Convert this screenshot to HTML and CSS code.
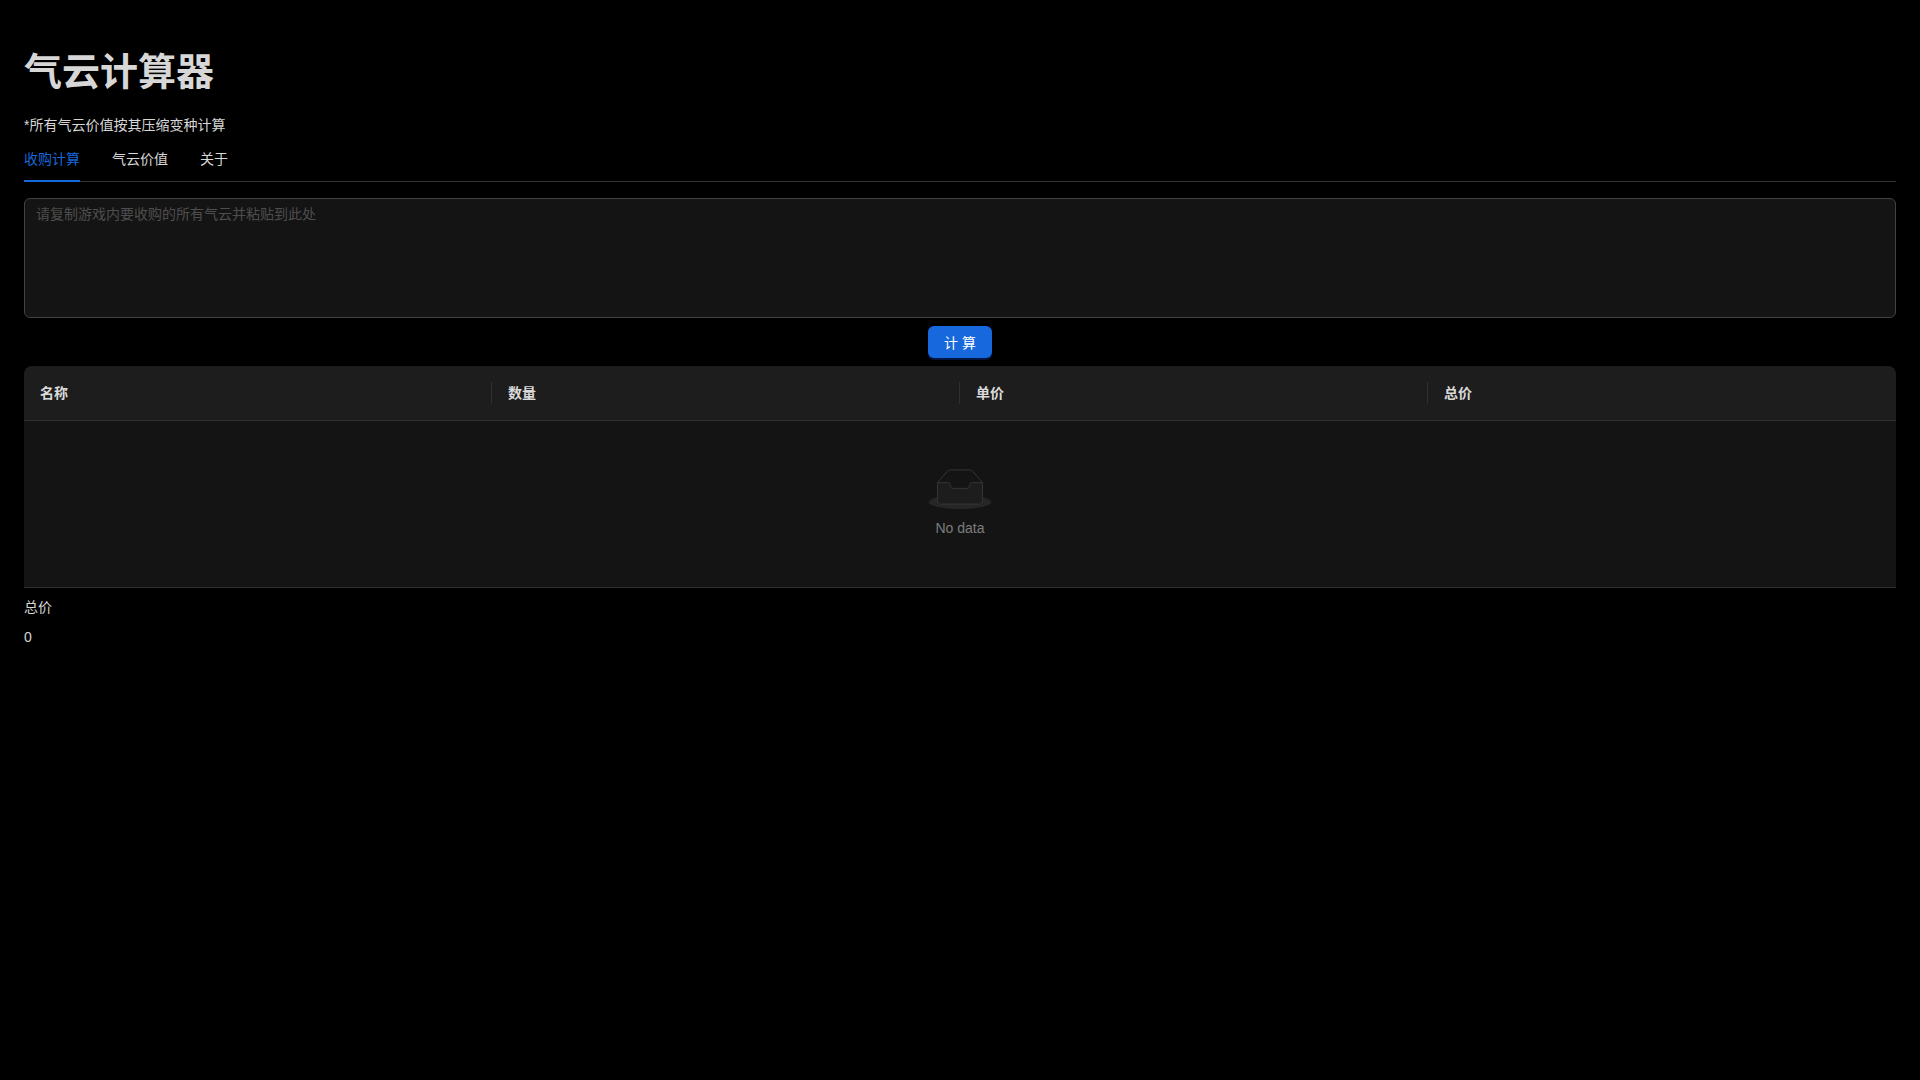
FILE: index.html
```html
<!DOCTYPE html>
<html lang="zh-CN">
<head>
  <meta charset="UTF-8" />
  <meta name="viewport" content="width=device-width, initial-scale=1" />
  <title>气云计算器</title>
  <link rel="stylesheet" href="styles.css">
</head>
<body>

  <div class="container">
    <h1>气云计算器</h1>
    <p class="note">*所有气云价值按其压缩变种计算</p>

    <div class="tabs">
      <div class="tab active">收购计算</div>
      <div class="tab">气云价值</div>
      <div class="tab">关于</div>
    </div>

    <textarea class="paste-box" placeholder="请复制游戏内要收购的所有气云并粘贴到此处"></textarea>

    <div class="actions">
      <button class="calc-button">计 算</button>
    </div>

    <table class="result-table">
      <thead>
        <tr>
          <th>名称</th>
          <th>数量</th>
          <th>单价</th>
          <th>总价</th>
        </tr>
      </thead>
      <tbody>
        <tr>
          <td colspan="4" class="empty-cell">
            <div class="empty">
              <svg class="empty-icon" width="64" height="40" viewBox="0 0 64 41">
                <g transform="translate(0 1)" fill="none" fill-rule="evenodd">
                  <ellipse cx="32" cy="33" rx="32" ry="7" fill="#262626"/>
                  <g fill-rule="nonzero" stroke="#363636">
                    <path d="M55 12.76L44.854 1.258C44.367.474 43.656 0 42.907 0H21.093c-.749 0-1.46.474-1.947 1.257L9 12.761V22h46v-9.24z"/>
                    <path d="M41.613 15.931c0-1.605.994-2.93 2.227-2.931H55v18.137C55 33.26 53.68 35 52.05 35h-40.1C10.32 35 9 33.259 9 31.137V13h11.16c1.233 0 2.227 1.323 2.227 2.928v.022c0 1.605 1.005 2.901 2.237 2.901h14.752c1.232 0 2.237-1.308 2.237-2.913v-.007z" fill="#1d1d1d"/>
                  </g>
                </g>
              </svg>
              <div class="empty-text">No data</div>
            </div>
          </td>
        </tr>
      </tbody>
    </table>

    <div class="total">
      <div class="total-title">总价</div>
      <div class="total-value">0</div>
    </div>
  </div>

</body>
</html>
```

FILE: styles.css
```css
* {
  margin: 0;
  padding: 0;
  box-sizing: border-box;
}

html, body {
  height: 100%;
}

body {
  background: #000;
  color: rgba(255, 255, 255, 0.85);
  font-family: "Liberation Sans", "Noto Sans CJK SC", sans-serif;
  font-size: 14px;
  line-height: 22px;
}

.container {
  padding: 49px 24px 0;
}

h1 {
  font-size: 38px;
  font-weight: 600;
  line-height: 46px;
  margin-bottom: 19px;
}

.note {
  height: 22px;
}

/* Tabs */
.tabs {
  display: flex;
  gap: 32px;
  border-bottom: 1px solid #303030;
  margin-bottom: 16px;
}

.tab {
  padding: 12px 0;
  height: 46px;
  margin-bottom: -1px;
}

.tab.active {
  color: #1668dc;
  border-bottom: 2px solid #1668dc;
}

/* Input */
.paste-box {
  display: block;
  width: 100%;
  height: 120px;
  background: #141414;
  border: 1px solid #424242;
  border-radius: 6px;
  padding: 4px 11px;
  color: rgba(255, 255, 255, 0.85);
  font-family: inherit;
  font-size: 14px;
  line-height: 22px;
  resize: none;
  outline: none;
}

.paste-box::placeholder {
  color: rgba(255, 255, 255, 0.25);
}

.actions {
  display: flex;
  justify-content: center;
  margin: 8px 0;
}

.calc-button {
  width: 64px;
  height: 32px;
  background: #1668dc;
  border: none;
  border-radius: 6px;
  color: #fff;
  font-family: inherit;
  font-size: 14px;
  box-shadow: 0 2px 0 rgba(0, 60, 180, 0.35);
}

/* Table */
.result-table {
  width: 100%;
  table-layout: fixed;
  border-collapse: separate;
  border-spacing: 0;
}

.result-table th {
  position: relative;
  height: 55px;
  padding: 16px;
  background: #1d1d1d;
  border-bottom: 1px solid #303030;
  text-align: left;
  font-weight: 600;
}

.result-table th:first-child {
  border-top-left-radius: 8px;
}

.result-table th:last-child {
  border-top-right-radius: 8px;
}

.result-table th:not(:last-child)::before {
  content: "";
  position: absolute;
  right: 0;
  top: 16px;
  width: 1px;
  height: 22px;
  background: #303030;
}

.empty-cell {
  padding: 16px;
  background: #141414;
  border-bottom: 1px solid #303030;
}

.empty {
  margin: 32px 0;
  text-align: center;
}

.empty-icon {
  display: block;
  margin: 0 auto 8px;
}

.empty-text {
  color: rgba(255, 255, 255, 0.45);
}

/* Total */
.total {
  margin-top: 8px;
}

.total-title {
  margin-bottom: 8px;
}
```
